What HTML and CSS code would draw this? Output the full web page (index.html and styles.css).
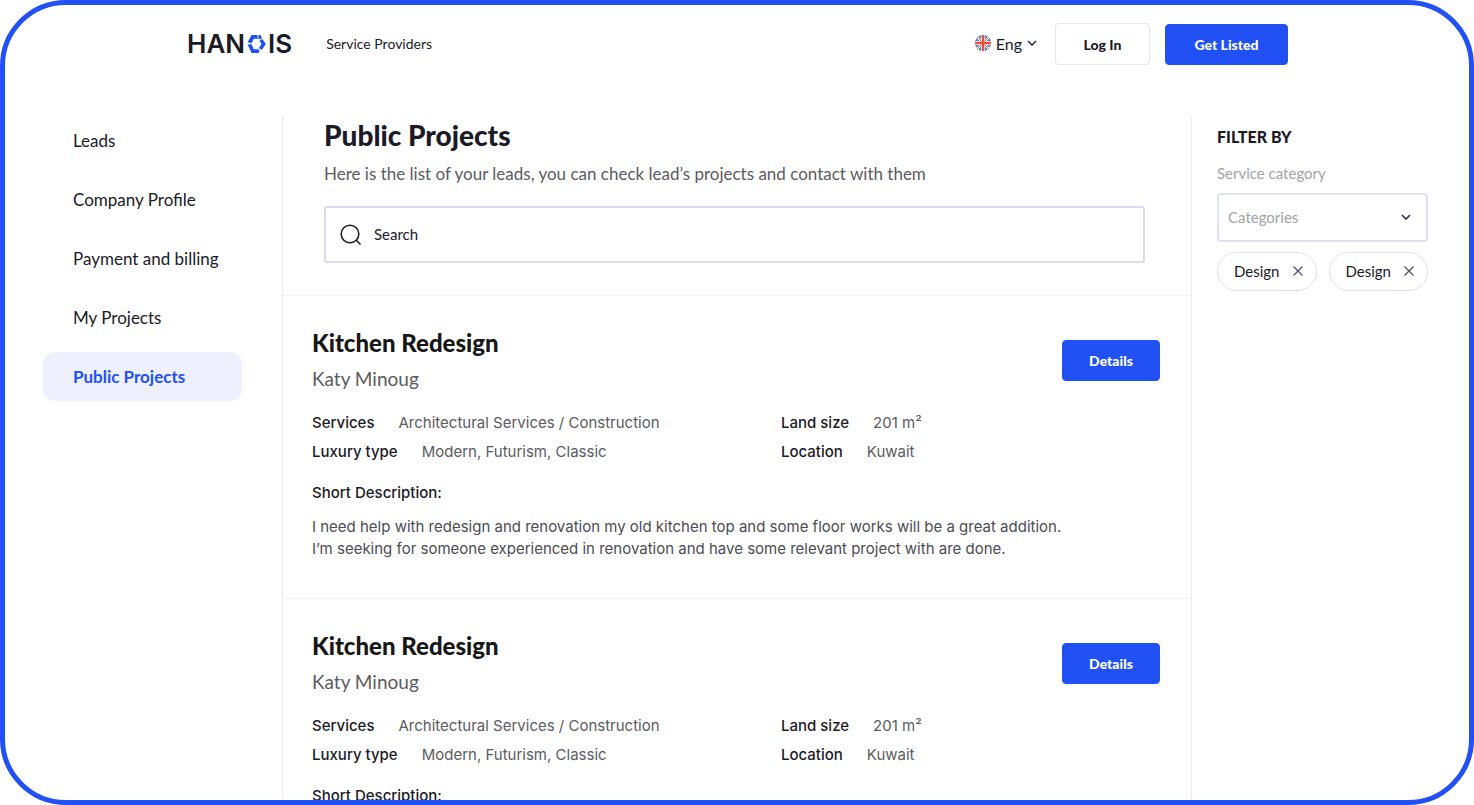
FILE: index.html
```html
<!DOCTYPE html>
<html lang="en">
<head>
<meta charset="utf-8">
<meta name="viewport" content="width=device-width, initial-scale=1">
<title>Hanois – Public Projects</title>
<link rel="stylesheet" href="styles.css">
</head>
<body>
<div class="frame">
  <header class="header">
    <a class="logo" href="#" aria-label="Hanois">
      <span>HAN</span>
      <svg class="logo-mark" viewBox="0 0 19 20" aria-hidden="true">
        <g fill="#2150f5">
          <path d="M4.6 1H10.2L11.2 4.8H6.8L4.6 9.2L.6 8.2Z"/>
          <path d="M11.4 1H13.6L15 4.2L12.4 5.4L11.6 4.4Z"/>
          <path d="M15.4 5L18.8 10L15 15.8L11.8 14.2L14.4 10L12.6 6.4Z"/>
          <path d="M.6 10.4L4.6 10.2L6.8 15.2H11.2L12.6 16.4L11.6 19H4.6Z"/>
        </g>
      </svg>
      <span>IS</span>
    </a>
    <nav class="top-nav"><a href="#">Service Providers</a></nav>
    <button class="language" type="button">
      <svg class="flag" viewBox="0 0 16 16" aria-hidden="true">
        <clipPath id="round"><circle cx="8" cy="8" r="8"/></clipPath>
        <g clip-path="url(#round)">
          <path fill="#3f7fc0" d="M0 0h16v16H0z"/>
          <path stroke="#fff" stroke-width="2.4" d="M0 0l16 16M16 0L0 16"/>
          <path stroke="#ef5b49" stroke-width="1" d="M0 0l16 16M16 0L0 16"/>
          <path stroke="#fff" stroke-width="4" d="M8 0v16M0 8h16"/>
          <path stroke="#f04a38" stroke-width="2.6" d="M8 0v16M0 8h16"/>
        </g>
      </svg>
      <span>Eng</span>
      <svg class="chevron" viewBox="0 0 10 6" aria-hidden="true"><path d="M1 1l4 4 4-4"/></svg>
    </button>
    <button class="button button-outline" type="button">Log In</button>
    <button class="button button-listed" type="button">Get Listed</button>
  </header>

  <div class="layout">
    <nav class="sidebar">
      <a href="#">Leads</a>
      <a href="#">Company Profile</a>
      <a href="#">Payment and billing</a>
      <a href="#">My Projects</a>
      <a class="active" href="#" aria-current="page">Public Projects</a>
    </nav>

    <main class="content">
      <section class="intro">
        <h1>Public Projects</h1>
        <p>Here is the list of your leads, you can check lead’s projects and contact with them</p>
        <label class="search">
          <svg viewBox="0 0 22 22" aria-hidden="true"><circle cx="10" cy="10" r="8.8"/><path d="M16 16l4.5 4.5"/></svg>
          <input type="search" placeholder="Search" aria-label="Search">
        </label>
      </section>

      <article class="project">
        <div class="project-head">
          <div>
            <h2>Kitchen Redesign</h2>
            <p class="client">Katy Minoug</p>
          </div>
          <button class="button button-details" type="button">Details</button>
        </div>
        <div class="facts">
          <dl>
            <div><dt>Services</dt><dd>Architectural Services / Construction</dd></div>
            <div><dt>Luxury type</dt><dd>Modern, Futurism, Classic</dd></div>
          </dl>
          <dl>
            <div><dt>Land size</dt><dd>201 m²</dd></div>
            <div><dt>Location</dt><dd>Kuwait</dd></div>
          </dl>
        </div>
        <h3>Short Description:</h3>
        <p class="description">I need help with redesign and renovation my old kitchen top and some floor works will be a great addition.<br>I’m seeking for someone experienced in renovation and have some relevant project with are done.</p>
      </article>

      <article class="project">
        <div class="project-head">
          <div>
            <h2>Kitchen Redesign</h2>
            <p class="client">Katy Minoug</p>
          </div>
          <button class="button button-details" type="button">Details</button>
        </div>
        <div class="facts">
          <dl>
            <div><dt>Services</dt><dd>Architectural Services / Construction</dd></div>
            <div><dt>Luxury type</dt><dd>Modern, Futurism, Classic</dd></div>
          </dl>
          <dl>
            <div><dt>Land size</dt><dd>201 m²</dd></div>
            <div><dt>Location</dt><dd>Kuwait</dd></div>
          </dl>
        </div>
        <h3>Short Description:</h3>
      </article>
    </main>

    <aside class="filters">
      <h2>FILTER BY</h2>
      <label for="category">Service category</label>
      <div class="select">
        <select id="category"><option>Categories</option><option>Design</option></select>
        <svg class="chevron" viewBox="0 0 10 6" aria-hidden="true"><path d="M1 1l4 4 4-4"/></svg>
      </div>
      <div class="chips">
        <span class="chip">Design
          <button type="button" aria-label="Remove Design"><svg viewBox="0 0 10 10" aria-hidden="true"><path d="M.5.5l9 9M9.5.5l-9 9"/></svg></button>
        </span>
        <span class="chip">Design
          <button type="button" aria-label="Remove Design"><svg viewBox="0 0 10 10" aria-hidden="true"><path d="M.5.5l9 9M9.5.5l-9 9"/></svg></button>
        </span>
      </div>
    </aside>
  </div>
</div>
</body>
</html>
```
FILE: styles.css
```css
:root {
  --blue: #2150f5;
  --ink: #1b1a26;
  --grey: #5b5b60;
  --line: #ebebf2;
  --field: #dadaf0;
}

* { box-sizing: border-box; }

body {
  margin: 0;
  background: #fff;
  color: var(--ink);
  font-family: Lato, "Liberation Sans", sans-serif;
  font-size: 17px;
}

h1, h2, h3, p, dl, dd { margin: 0; }
a { color: inherit; text-decoration: none; }
button, input, select { font: inherit; color: inherit; }
button { cursor: pointer; }

.frame {
  display: flex;
  flex-direction: column;
  height: 100vh;
  overflow: hidden;
  border: 5px solid var(--blue);
  border-radius: 66px;
}

.header {
  display: flex;
  align-items: center;
  width: 100%;
  max-width: 1102px;
  margin: 0 auto;
  padding: 18px 0 51px;
}

.logo {
  display: flex;
  align-items: center;
  gap: 2px;
  padding-left: 1px;
  font: 600 26px/30px Inter, sans-serif;
}
.logo-mark { width: 19px; height: 20px; }

.top-nav { margin: 0 auto 0 34px; padding-bottom: 2px; font-size: 14px; }

.language {
  display: flex;
  align-items: center;
  gap: 5px;
  margin-right: 18px;
  padding: 0 0 2px;
  border: 0;
  background: none;
  font-size: 16px;
}
.flag { width: 16px; height: 16px; }

.chevron {
  width: 10px;
  height: 6px;
  fill: none;
  stroke: #2b3050;
  stroke-width: 1.6;
}

.button {
  height: 41px;
  border: 1px solid var(--blue);
  border-radius: 4px;
  background: var(--blue);
  color: #fff;
  font-size: 14px;
  font-weight: 900;
}
.button-outline {
  width: 95px;
  height: 42px;
  margin-right: 15px;
  border-color: #e6e6e8;
  background: #fff;
  color: var(--ink);
}
.button-listed { width: 123px; }
.button-details { width: 98px; }

.layout {
  display: grid;
  grid-template-columns: 277px minmax(0, 1fr) 277px;
  flex: 1;
  min-height: 0;
}

.sidebar {
  display: flex;
  flex-direction: column;
  gap: 10px;
  padding: 0 40px 0 38px;
}
.sidebar a {
  padding: 0 30px;
  border-radius: 12px;
  line-height: 49px;
  white-space: nowrap;
}
.sidebar .active {
  background: #eef0fd;
  color: var(--blue);
  font-weight: 700;
}

.content {
  overflow: hidden;
  border: solid var(--line);
  border-width: 0 1px;
}

.intro {
  padding: 0 46px 32px 41px;
}
.intro h1 { font-size: 28px; font-weight: 900; line-height: 38px; }
.intro p { margin: 8px 0 20px; color: var(--grey); line-height: 24px; }

.search {
  display: flex;
  align-items: center;
  gap: 12px;
  height: 57px;
  padding: 0 14px;
  border: 2px solid var(--field);
  border-radius: 3px;
  font-size: 15px;
}
.search svg {
  width: 22px;
  height: 22px;
  fill: none;
  stroke: var(--ink);
  stroke-width: 1.6;
}
.search input {
  flex: 1;
  min-width: 0;
  padding: 0 0 2px;
  border: 0;
  outline: 0;
  background: none;
}
.search input::placeholder { color: var(--ink); opacity: 1; }

.project {
  padding: 32px 31px 38px 29px;
  border-top: 1px solid #f2f2f5;
  font-family: Inter, "Liberation Sans", sans-serif;
  font-size: 15px;
}
.project-head {
  display: flex;
  align-items: center;
  justify-content: space-between;
  font-family: Lato, "Liberation Sans", sans-serif;
}
.project h2 { color: #171717; font-size: 24px; font-weight: 900; line-height: 30px; }
.client { margin-top: 8px; color: var(--grey); font-size: 19px; line-height: 26px; }

.facts {
  display: grid;
  grid-template-columns: 469fr 379fr;
  margin: 21px 0 20px;
}
.facts dl { display: grid; gap: 9px; }
.facts dl div { display: flex; gap: 24px; line-height: 20px; }
.facts dt, .project h3 { font-size: 15px; font-weight: 500; }
.facts dd { color: var(--grey); }
.project h3 { line-height: 22px; }
.description { margin-top: 12px; color: #4c4c52; line-height: 22px; }

.filters { padding: 8px 41px 0 25px; }
.filters h2 { font-size: 16px; font-weight: 900; line-height: 26px; }
.filters label {
  display: block;
  margin: 11px 0 8px;
  color: #a3a3a8;
  font-size: 15px;
  line-height: 24px;
}

.select { position: relative; }
.select select {
  width: 100%;
  height: 49px;
  padding: 0 9px 2px;
  border: 2px solid #e0e0f4;
  border-radius: 4px;
  appearance: none;
  background: #fff;
  color: #a3a3a8;
  font-size: 15px;
}
.select .chevron {
  position: absolute;
  top: 21px;
  right: 17px;
  pointer-events: none;
}

.chips { display: flex; gap: 12px; margin-top: 10px; }
.chip {
  display: flex;
  flex: 1;
  align-items: center;
  justify-content: space-between;
  height: 39px;
  padding: 0 13px 2px 16px;
  border: 1px solid #e2e2e6;
  border-radius: 20px;
  font-size: 15px;
}
.chip button {
  display: flex;
  padding: 0;
  border: 0;
  background: none;
}
.chip svg { width: 10px; height: 10px; stroke: #4a4e66; stroke-width: 1.2; }
```
